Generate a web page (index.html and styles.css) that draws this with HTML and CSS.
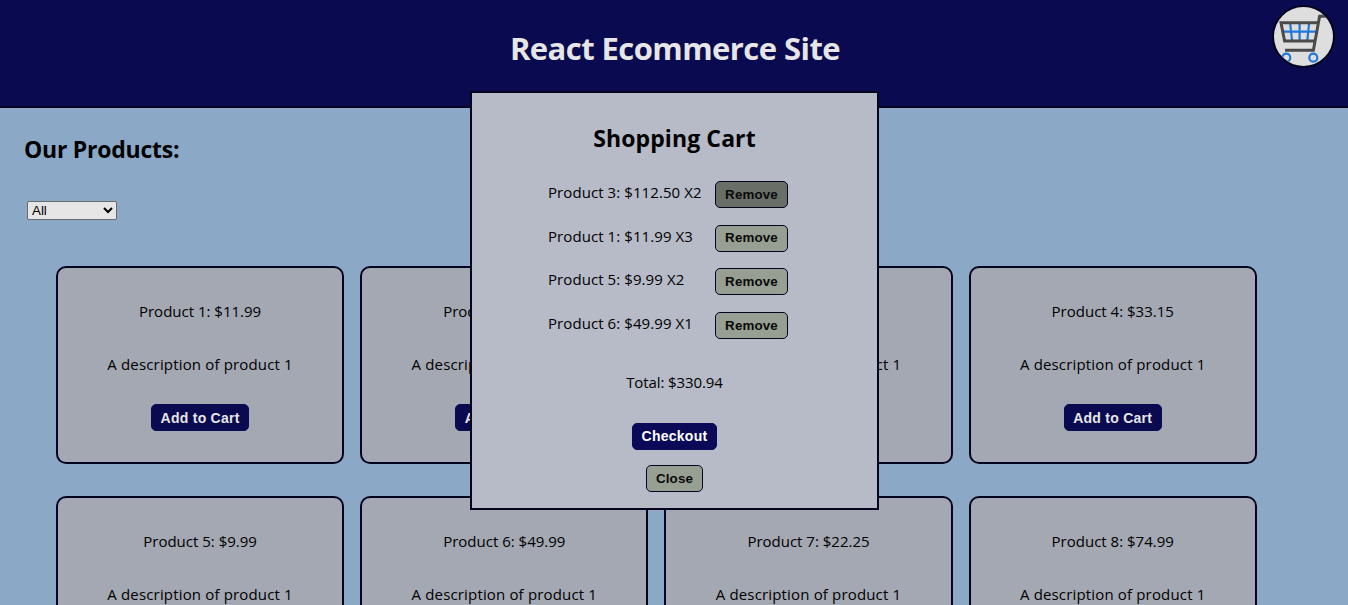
FILE: index.html
```html
<!DOCTYPE html>
<html lang="en">
<head>
<meta charset="utf-8">
<title>React Ecommerce Site</title>
<link rel="stylesheet" href="styles.css">
</head>
<body>
<header class="header">
  <h1 class="site-title">React Ecommerce Site</h1>
  <button class="cart-button" aria-label="Open cart">
    <svg class="cart-icon" viewBox="0 0 59 59">
      <g fill="none" stroke="#1f78d8" stroke-width="2.2">
        <path d="M9 24.7H43M16.2 17L18 33M25.6 17V33M35 17L33.4 33"/>
        <circle cx="12.3" cy="50.7" r="4"/>
        <circle cx="39.3" cy="50.7" r="4"/>
      </g>
      <path d="M59 9.3H45.6L39.4 43.3H11M44 15.7H7L10.6 34H41" fill="none" stroke="#4a4a4a" stroke-width="3"/>
    </svg>
  </button>
</header>
<main class="main">
  <h2 class="section-title">Our Products:</h2>
  <select class="filter"><option>All</option></select>
  <div class="products">
    <article class="card"><p class="name">Product 1: $11.99</p><p class="desc">A description of product 1</p><button class="btn primary">Add to Cart</button></article>
    <article class="card"><p class="name">Product 2: $24.99</p><p class="desc">A description of product 1</p><button class="btn primary">Add to Cart</button></article>
    <article class="card"><p class="name">Product 3: $112.50</p><p class="desc">A description of product 1</p><button class="btn primary">Add to Cart</button></article>
    <article class="card"><p class="name">Product 4: $33.15</p><p class="desc">A description of product 1</p><button class="btn primary">Add to Cart</button></article>
    <article class="card"><p class="name">Product 5: $9.99</p><p class="desc">A description of product 1</p><button class="btn primary">Add to Cart</button></article>
    <article class="card"><p class="name">Product 6: $49.99</p><p class="desc">A description of product 1</p><button class="btn primary">Add to Cart</button></article>
    <article class="card"><p class="name">Product 7: $22.25</p><p class="desc">A description of product 1</p><button class="btn primary">Add to Cart</button></article>
    <article class="card"><p class="name">Product 8: $74.99</p><p class="desc">A description of product 1</p><button class="btn primary">Add to Cart</button></article>
  </div>
</main>
<section class="modal" role="dialog">
  <h2 class="modal-title">Shopping Cart</h2>
  <div class="items">
    <span class="item">Product 3: $112.50 X2</span><button class="btn secondary hovered">Remove</button>
    <span class="item">Product 1: $11.99 X3</span><button class="btn secondary">Remove</button>
    <span class="item">Product 5: $9.99 X2</span><button class="btn secondary">Remove</button>
    <span class="item">Product 6: $49.99 X1</span><button class="btn secondary">Remove</button>
  </div>
  <p class="total">Total: $330.94</p>
  <button class="btn primary checkout">Checkout</button>
  <button class="btn secondary close">Close</button>
</section>
</body>
</html>
```
FILE: styles.css
```css
* { box-sizing: border-box; }
html, body { height: 100%; }
body {
  margin: 0;
  overflow: hidden;
  background: #8ba9c7;
  color: #000;
  font: 15px/22px "Open Sans", "Noto Sans", sans-serif;
}
h1, h2, p { margin: 0; }
.header {
  position: relative;
  display: flex;
  justify-content: center;
  height: 108px;
  padding: 27px 0 0 2px;
  background: #0a0a50;
  border-bottom: 2px solid #04041f;
}
.site-title { color: #e6e6e6; font-size: 31px; line-height: 43px; font-weight: 700; letter-spacing: -0.56px; }
.cart-button {
  position: absolute;
  top: 5px;
  right: 13px;
  width: 63px;
  height: 63px;
  padding: 0;
  overflow: hidden;
  background: #dedede;
  border: 2px solid #04041f;
  border-radius: 50%;
}
.cart-icon { display: block; width: 59px; height: 59px; }
.main { padding: 25px 24px 0; }
.section-title { font-size: 23px; line-height: 32px; font-weight: 700; letter-spacing: -0.25px; }
.filter {
  display: block;
  width: 90px;
  height: 19px;
  margin: 36px 0 46px 3px;
  padding: 0;
  background: #e6e6e6;
  border: 1px solid #6b6b6b;
  border-radius: 2px;
  color: #000;
  font: 13.33px "Liberation Sans", Arial, sans-serif;
}
.products {
  display: grid;
  grid-template-columns: repeat(4, 1fr);
  gap: 32px 16px;
  width: 1200.8px;
  margin-left: 32px;
}
.card {
  display: flex;
  flex-direction: column;
  align-items: center;
  height: 198px;
  padding-top: 32px;
  background: #a4a8b3;
  border: 2px solid #04041f;
  border-radius: 10px;
}
.desc { margin: 31px 0 29px; letter-spacing: 0.16px; }
.btn {
  height: 27px;
  padding: 0 9px;
  border: 1px solid #04041f;
  border-radius: 5px;
  font: 700 13.33px/1 "Liberation Sans", Arial, sans-serif;
  white-space: nowrap;
}
.primary { width: 98px; padding: 0; background: #0a0a50; border-color: #0a0a50; color: #e6e6e6; font-size: 14px; letter-spacing: 0.25px; }
.secondary { padding: 0; background: #979f93; color: #0a0a0a; letter-spacing: 0.15px; }
.hovered { background: #696e67; }
.modal {
  position: absolute;
  top: 91px;
  left: 470px;
  display: flex;
  flex-direction: column;
  align-items: center;
  width: 409px;
  height: 419px;
  padding-top: 29px;
  background: #b7bbc7;
  border: 2px solid #04041f;
}
.modal-title { font-size: 23px; line-height: 32px; font-weight: 700; letter-spacing: 0.1px; }
.items {
  display: grid;
  grid-template-columns: 167px 73px;
  row-gap: 16.6px;
  margin: 27px 13px 0 0;
}
.item { height: 27px; line-height: 22px; letter-spacing: 0.08px; }
.total { margin-top: 32px; letter-spacing: -0.1px; }
.checkout { width: 85px; margin-top: 30px; background: #0a0a58; border-color: #0a0a58; color: #fff; }
.close { width: 57px; margin-top: 15px; }
```
